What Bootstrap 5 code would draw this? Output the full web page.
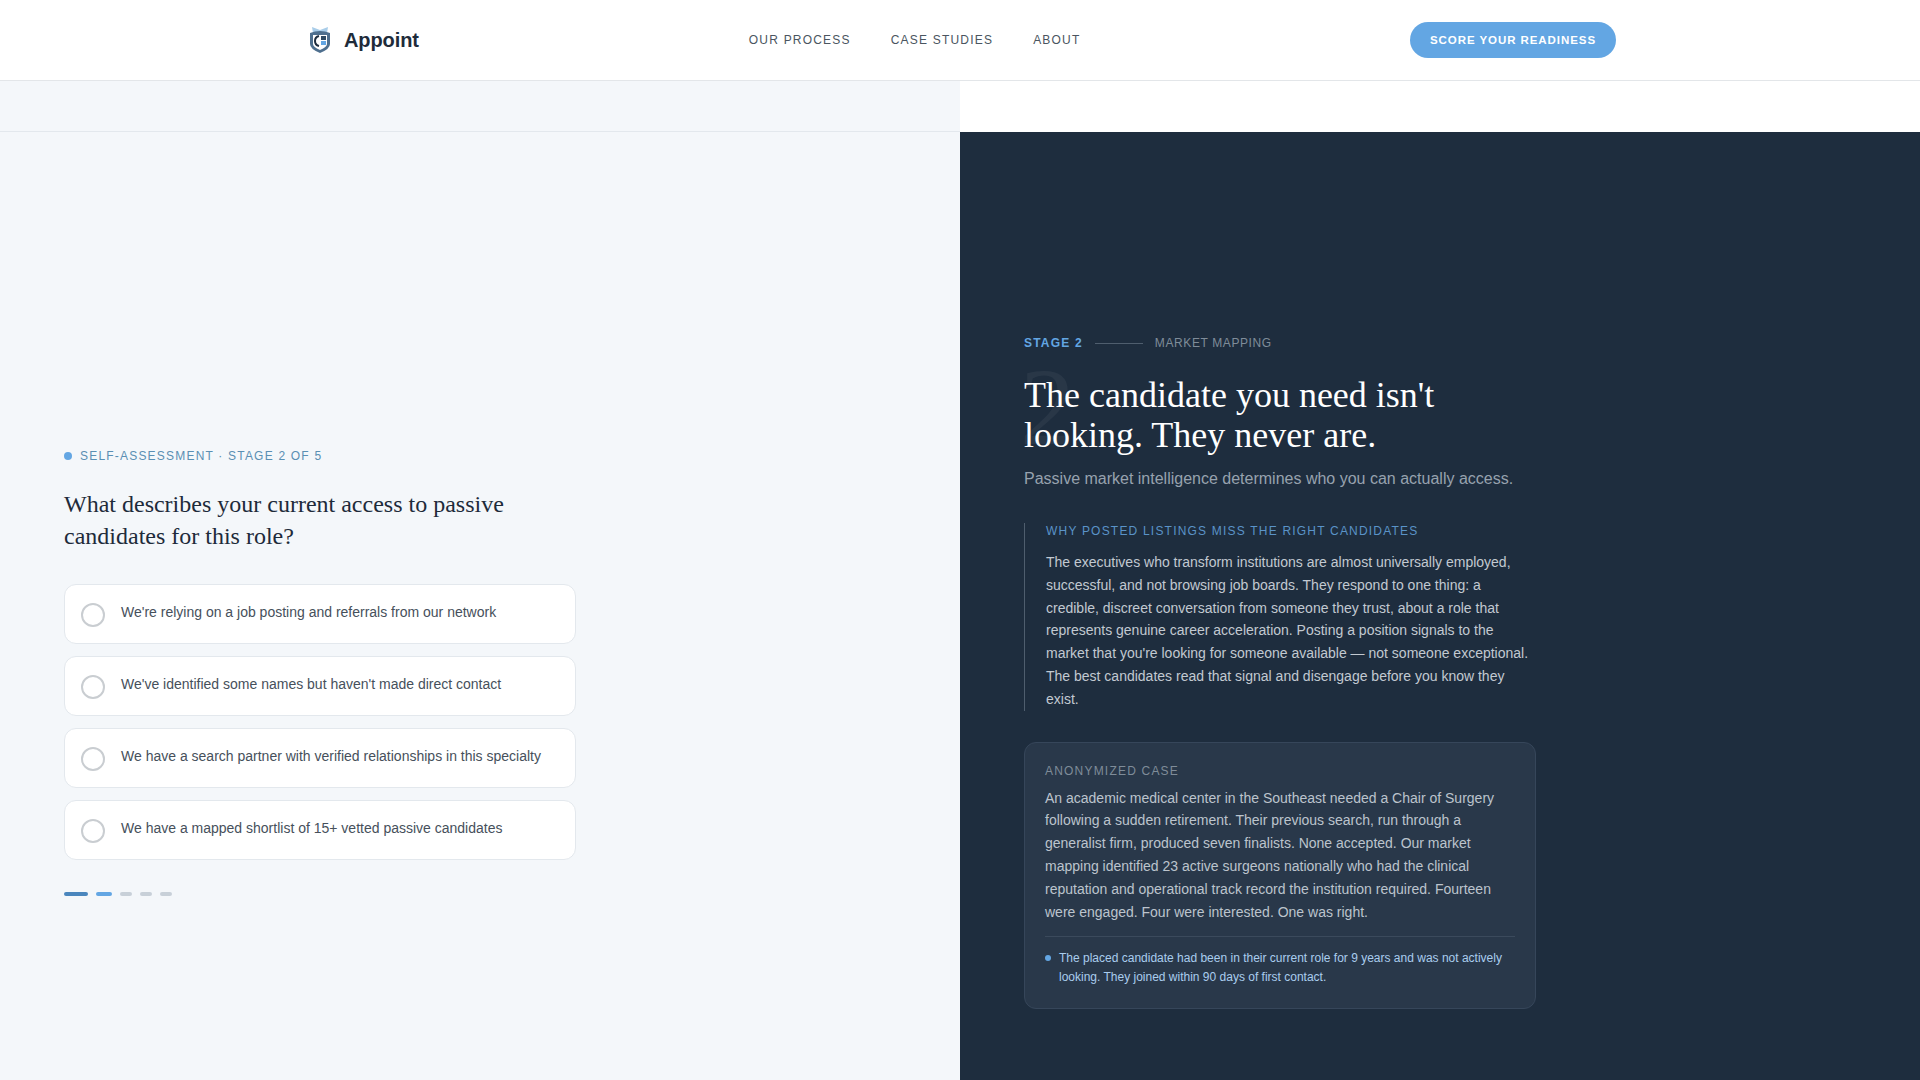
<!DOCTYPE html>
<html lang="en">
<head>
  <meta charset="UTF-8" />
  <meta name="viewport" content="width=device-width, initial-scale=1">
  <title>Appoint</title>
  <link href="https://cdn.jsdelivr.net/npm/bootstrap@5.3.0/dist/css/bootstrap.min.css" rel="stylesheet" />
  <style>
    body { font-family: "Liberation Sans", Arial, sans-serif; background: #fff; overflow: hidden; height: 1080px; }
    .topbar { height: 81px; background: #fff; border-bottom: 1px solid #e3e6e9; padding: 0 304px 0 308px; }
    .brand-name { font-size: 20px; font-weight: 700; color: #1e2b3a; letter-spacing: -.1px; }
    .menu-wrap { gap: 40px; margin-left: 330px; }
    .menu-link { font-size: 12px; letter-spacing: 1.2px; color: #4a5560; text-decoration: none; text-transform: uppercase; }
    .cta-pill { background: #63a6e3; color: #fff; font-size: 11.52px; font-weight: 700; letter-spacing: .92px; border: 0; border-radius: 999px; height: 36px; padding: 1px 20px 0; margin-left: auto; }
    .split { height: 999px; }
    .pane-left { width: 960px; background: #f4f7fa; }
    .band-left { height: 51px; border-bottom: 1px solid #e3e8ed; }
    .left-inner { width: 512px; margin-left: 64px; padding-top: 317px; }
    .eyebrow { font-size: 12px; letter-spacing: 1.2px; color: #5a8fb3; line-height: 14px; }
    .eyebrow-dot { width: 8px; height: 8px; border-radius: 50%; background: #63a6e3; }
    .question { font-family: "Liberation Serif", "Times New Roman", serif; font-size: 24px; font-weight: 400; line-height: 32px; color: #1e2b3a; margin: 24.5px 0 32px; }
    .answer-list { gap: 12px; }
    .answer { height: 60px; background: #fff; border: 1px solid #e3e8ed; border-radius: 12px; padding: 0 16px; gap: 16px; font-size: 14px; color: #46505b; }
    .answer-ring { width: 24px; height: 24px; border: 2px solid #c9cdd1; border-radius: 50%; flex-shrink: 0; margin-top: 3px; }
    .answer-text { margin-top: -2px; }
    .steps { margin-top: 32px; gap: 8px; }
    .step { height: 4px; width: 12px; border-radius: 2px; background: #c8d0d8; }
    .step-now { width: 24px; background: #4a86bd; }
    .step-done { width: 16px; background: #63a6e3; }
    .pane-right { width: 960px; background: #fff; }
    .band-right { height: 51px; }
    .dark-panel { height: 948px; background: #1e2d3e; padding: 204px 0 0 64px; }
    .dark-inner { width: 512px; position: relative; }
    .stage-line { font-size: 12px; letter-spacing: .6px; line-height: 14px; color: #7f8c99; gap: 12px; }
    .stage-num { color: #63a6e3; font-weight: 700; letter-spacing: 1.2px; }
    .stage-rule { width: 48px; height: 1px; background: #4f5e6e; }
    .ghost-num { position: absolute; left: -4px; top: 16px; font-family: "Liberation Serif", serif; font-size: 110px; line-height: 1; color: rgba(255,255,255,.05); }
    .headline { font-family: "Liberation Serif", "Times New Roman", serif; font-size: 36px; font-weight: 400; line-height: 40px; color: #fff; margin: 25px 0 12px; position: relative; }
    .subline { font-size: 16px; line-height: 24px; color: #97a2ae; margin-bottom: 32px; }
    .why-block { border-left: 1px solid #4f5e6e; padding-left: 21px; margin-bottom: 31px; }
    .why-title { font-size: 12px; letter-spacing: 1.2px; line-height: 16px; color: #5a93c8; margin-bottom: 12px; }
    .why-text { font-size: 14px; line-height: 22.8px; color: #c2c9d1; margin: 0; }
    .case-box { background: #29384a; border: 1px solid #36465a; border-radius: 12px; padding: 20px 20px 21px; }
    .case-title { font-size: 12px; letter-spacing: 1.2px; line-height: 16px; color: #7f8c99; margin-bottom: 8px; }
    .case-text { font-size: 14px; line-height: 22.85px; color: #bcc4cd; margin: 0 0 12.6px; }
    .case-foot { border-top: 1px solid #3b4a5c; padding-top: 12px; gap: 8px; font-size: 12px; line-height: 19px; color: #a9cdee; }
    .case-dot { width: 6px; height: 6px; border-radius: 50%; background: #63a6e3; flex-shrink: 0; margin-top: 6px; }
  </style>
</head>
<body>
  <!-- top nav -->
  <nav class="topbar d-flex align-items-center">
    <a class="d-flex align-items-center gap-2 text-decoration-none" href="#">
      <svg width="24" height="28" viewBox="0 0 24 28" fill="none">
        <path d="M5 7 L4 1 L12 4 L20 1 L19 7 Z" fill="#a9cde9"/>
        <path d="M2 7 Q12 3 22 7 V18 Q22 23 12 27 Q2 23 2 18 Z" fill="#4e6f8e"/>
        <path d="M5 9 H19 V18 Q19 21 12 24 Q5 21 5 18 Z" fill="#fff"/>
        <path d="M11 10 Q7 11 7 15 Q7 19 11 20" stroke="#1e2d3e" stroke-width="2" fill="none"/>
        <rect x="13" y="10" width="5" height="4" fill="#2f4a63"/>
        <rect x="13" y="15" width="5" height="4" fill="#63a6e3"/>
      </svg>
      <span class="brand-name ms-1">Appoint</span>
    </a>
    <div class="menu-wrap d-flex">
      <a class="menu-link" href="#">Our Process</a>
      <a class="menu-link" href="#">Case Studies</a>
      <a class="menu-link" href="#">About</a>
    </div>
    <button class="cta-pill" type="button">SCORE YOUR READINESS</button>
  </nav>

  <div class="split d-flex">
    <!-- question side -->
    <div class="pane-left">
      <div class="band-left"></div>
      <div class="left-inner">
        <div class="eyebrow d-flex align-items-center gap-2">
          <span class="eyebrow-dot"></span>
          <span>SELF-ASSESSMENT · STAGE 2 OF 5</span>
        </div>
        <h2 class="question">What describes your current access to passive candidates for this role?</h2>
        <div class="answer-list d-flex flex-column">
          <div class="answer d-flex align-items-center"><span class="answer-ring"></span><span class="answer-text">We're relying on a job posting and referrals from our network</span></div>
          <div class="answer d-flex align-items-center"><span class="answer-ring"></span><span class="answer-text">We've identified some names but haven't made direct contact</span></div>
          <div class="answer d-flex align-items-center"><span class="answer-ring"></span><span class="answer-text">We have a search partner with verified relationships in this specialty</span></div>
          <div class="answer d-flex align-items-center"><span class="answer-ring"></span><span class="answer-text">We have a mapped shortlist of 15+ vetted passive candidates</span></div>
        </div>
        <div class="steps d-flex">
          <span class="step step-now"></span>
          <span class="step step-done"></span>
          <span class="step"></span>
          <span class="step"></span>
          <span class="step"></span>
        </div>
      </div>
    </div>

    <!-- dark side -->
    <div class="pane-right">
      <div class="band-right"></div>
      <div class="dark-panel">
        <div class="dark-inner">
          <div class="stage-line d-flex align-items-center">
            <span class="stage-num">STAGE 2</span>
            <span class="stage-rule"></span>
            <span>MARKET MAPPING</span>
          </div>
          <div class="ghost-num">2</div>
          <h1 class="headline">The candidate you need isn't looking. They never are.</h1>
          <p class="subline">Passive market intelligence determines who you can actually access.</p>
          <div class="why-block">
            <div class="why-title">WHY POSTED LISTINGS MISS THE RIGHT CANDIDATES</div>
            <p class="why-text">The executives who transform institutions are almost universally employed, successful, and not browsing job boards. They respond to one thing: a credible, discreet conversation from someone they trust, about a role that represents genuine career acceleration. Posting a position signals to the market that you're looking for someone available — not someone exceptional. The best candidates read that signal and disengage before you know they exist.</p>
          </div>
          <div class="case-box">
            <div class="case-title">ANONYMIZED CASE</div>
            <p class="case-text">An academic medical center in the Southeast needed a Chair of Surgery following a sudden retirement. Their previous search, run through a generalist firm, produced seven finalists. None accepted. Our market mapping identified 23 active surgeons nationally who had the clinical reputation and operational track record the institution required. Fourteen were engaged. Four were interested. One was right.</p>
            <div class="case-foot d-flex">
              <span class="case-dot"></span>
              <span>The placed candidate had been in their current role for 9 years and was not actively looking. They joined within 90 days of first contact.</span>
            </div>
          </div>
        </div>
      </div>
    </div>
  </div>
</body>
</html>
